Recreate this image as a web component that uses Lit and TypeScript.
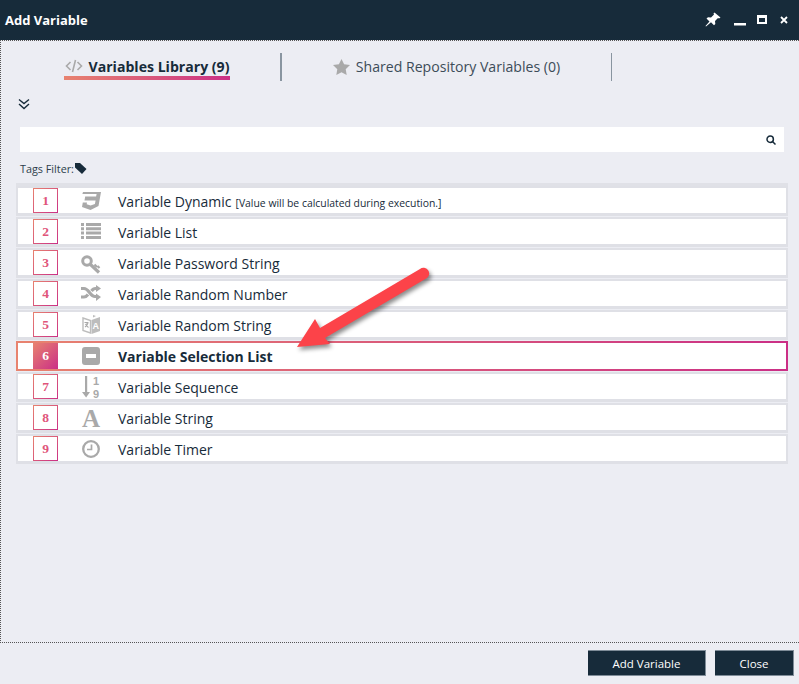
import { LitElement, css, html, svg } from "lit";
import { customElement } from "lit/decorators.js";

const GREY = "#a9a9a9";

const icons: Record<string, unknown> = {
  css3: svg`<path fill="${GREY}" d="M4 3h18l-2.500 14-8 4-8.500-3 .8-4.500h4.200l-.3 1.800 3.900 1.300 4.300-1.500.7-3.700H5.500l.7-3.900h10.900l.5-2.500H3.400z"/>`,
  list: svg`<path fill="${GREY}" d="M2 3h3v3H2zM7 3h15v3H7zM2 7.300h3v3H2zM7 7.300h15v3H7zM2 11.600h3v3H2zM7 11.600h15v3H7zM2 16h3v3H2zM7 16h15v3H7z"/>`,
  key: svg`<g fill="none" stroke="${GREY}"><circle cx="8" cy="10" r="4.300" stroke-width="3"/><path stroke-width="3.200" d="M11.500 13.500l8.500 8"/><path stroke-width="2.200" d="M15.500 13.500l2.500 2.500M18.500 15l2 2"/></g>`,
  shuffle: svg`<g fill="none" stroke="${GREY}" stroke-width="3.200"><path d="M2 6.500h3c5 0 6 8 11 8h2"/><path d="M2 15h3c2 0 3-1.200 4-2.500M12.500 9c1-1.500 2-2.500 4-2.500H18"/></g><path fill="${GREY}" d="M17 3l5 3.500-5 3.500zM17 11.500l5 3.500-5 4z"/>`,
  translate: svg`<path fill="#fff" stroke="#bdbdbd" stroke-width="1.400" d="M4 5l7.500 2.500V20L4 17.500z"/><path fill="#bdbdbd" d="M12.500 7l8.500-3v14l-8.500 3z"/><path fill="#bdbdbd" d="M14 2l3 1-3 1.500z"/><path stroke="#a9a9a9" stroke-width="1.100" fill="none" d="M5.500 9.500h4M7.500 9v1.500M6 14c1.500-1 2.500-2.500 3-4M6.500 11c.5 1.200 1.500 2.500 3 3.500"/><text x="16.800" y="15.500" text-anchor="middle" font-family="Liberation Sans" font-weight="700" font-size="9" fill="#fff">A</text>`,
  minus: svg`<path fill="${GREY}" fill-rule="evenodd" d="M6 3h12a3 3 0 0 1 3 3v12a3 3 0 0 1-3 3H6a3 3 0 0 1-3-3V6a3 3 0 0 1 3-3zM7 10v4h10v-4z"/>`,
  sequence: svg`<path fill="${GREY}" d="M6 1h2.200v16H11l-3.900 5.500L3 17h3z"/><text x="17" y="9.500" text-anchor="middle" font-family="Liberation Sans" font-weight="700" font-size="11" fill="${GREY}">1</text><text x="17" y="22.500" text-anchor="middle" font-family="Liberation Sans" font-weight="700" font-size="11" fill="${GREY}">9</text>`,
  letter: svg`<text x="12" y="20.500" text-anchor="middle" font-family="Liberation Serif" font-weight="700" font-size="25" fill="${GREY}">A</text>`,
  clock: svg`<g fill="none" stroke="${GREY}"><circle cx="12" cy="12" r="7.800" stroke-width="2.300"/><path stroke-width="1.700" d="M12.500 7.500v5H8"/></g>`,
};

const rows = [
  { icon: "css3", name: "Variable Dynamic", note: "[Value will be calculated during execution.]" },
  { icon: "list", name: "Variable List" },
  { icon: "key", name: "Variable Password String" },
  { icon: "shuffle", name: "Variable Random Number" },
  { icon: "translate", name: "Variable Random String" },
  { icon: "minus", name: "Variable Selection List", selected: true },
  { icon: "sequence", name: "Variable Sequence" },
  { icon: "letter", name: "Variable String" },
  { icon: "clock", name: "Variable Timer" },
];

@customElement("app-root")
export class AppRoot extends LitElement {
  static styles = css`
    :host {
      display: block;
      width: 799px;
      height: 684px;
      overflow: hidden;
      position: relative;
      background: #ecedf3;
      color: #172b3a;
      font-family: "Open Sans", "Noto Sans", sans-serif;
    }

    .titlebar {
      height: 40px;
      background: #172b3a;
      color: #fff;
      display: flex;
      align-items: center;
      padding: 0 11px 0 5px;
    }
    .title {
      font-size: 13px;
      font-weight: 700;
      flex: 1;
    }
    .win-btns {
      display: flex;
      align-items: center;
    }
    .win-btns svg {
      display: block;
    }

    .body {
      height: 603px;
      box-sizing: border-box;
      border-top: 1px dotted #555;
      border-bottom: 1px dotted #555;
      border-left: 1px dotted #555;
      padding-top: 12px;
    }

    .tabs {
      display: flex;
      height: 28px;
    }
    .tab {
      box-sizing: border-box;
      height: 28px;
      border-right: 2px solid #8995a0;
      display: flex;
      justify-content: center;
    }
    .tab-1 {
      width: 281px;
      padding-left: 13px;
    }
    .tab-2 {
      width: 330px;
      border-right-width: 1px;
      color: #3c4c58;
    }
    .tab-inner {
      box-sizing: border-box;
      display: flex;
      align-items: center;
      gap: 6px;
      height: 27px;
      padding: 0 1px;
      font-size: 14.100px;
      white-space: nowrap;
    }
    .tab-1 .tab-inner {
      padding-top: 3px;
      font-weight: 700;
      border-bottom: 4px solid;
      border-image: linear-gradient(90deg, #e8836f, #cb2f86) 1;
    }

    .expander {
      display: block;
      margin: 17px 0 0 17px;
    }

    .search {
      margin: 17px 15px 0 19px;
      height: 25px;
      background: #fff;
      display: flex;
      align-items: center;
      justify-content: flex-end;
      padding-right: 8px;
    }

    .tags {
      display: flex;
      align-items: center;
      gap: 1px;
      margin: 8px 0 0 19px;
      height: 16px;
      font-size: 10.800px;
      color: #2c3e4b;
    }

    .list {
      margin: 7px 11px 0 15px;
      border-top: 3px solid #e0e1e7;
      display: flex;
      flex-direction: column;
      gap: 1px;
    }
    .row {
      height: 30px;
      box-sizing: border-box;
      background: #fff;
      border: 2px solid #dfe0e6;
      border-bottom-width: 3px;
      display: flex;
      align-items: center;
      padding-left: 15px;
    }
    .row.selected {
      border: 2px solid;
      border-image: linear-gradient(90deg, #e8836f, #cb2f86) 1;
    }
    .num {
      box-sizing: border-box;
      width: 25px;
      height: 25px;
      border: 1px solid;
      border-image: linear-gradient(135deg, #e8836f, #cb2f86) 1;
      display: flex;
      align-items: center;
      justify-content: center;
      font-family: "Liberation Serif", serif;
      font-weight: 700;
      font-size: 13.500px;
      color: #e0557a;
    }
    .selected .num {
      border: 0;
      height: 26px;
      background: linear-gradient(135deg, #e8836f, #cb2f86);
      color: #fff;
    }
    .icon {
      width: 24px;
      height: 24px;
      margin: 0 15px 0 21px;
      flex: none;
    }
    .name {
      font-size: 14px;
      white-space: nowrap;
      margin-top: 2px;
    }
    .selected .name {
      font-weight: 700;
      margin-top: 0;
    }
    .note {
      font-size: 10.400px;
      margin-left: 4px;
    }

    .footer {
      display: flex;
      justify-content: flex-end;
      gap: 9px;
      padding: 7px 5px 0 0;
    }
    .btn {
      height: 26px;
      box-sizing: border-box;
      background: #172b3a;
      color: #fff;
      border: 0;
      border-right: 1px solid #7f8c98;
      border-bottom: 1px solid #7f8c98;
      border-top: 1px solid #7f8c98;
      font: 11.500px "Open Sans", "Noto Sans", sans-serif;
      padding: 0;
    }
    .add {
      width: 118px;
    }
    .close {
      width: 79px;
    }

    .arrow {
      position: absolute;
      left: 290px;
      top: 260px;
      filter: drop-shadow(2px 3px 2px rgba(0, 0, 0, 0.45));
    }
  `;

  render() {
    return html`
      <div class="titlebar">
        <div class="title">Add Variable</div>
        <div class="win-btns">
          <svg width="16" height="16" viewBox="0 0 16 16" style="margin-right:13px">
            <path fill="#fff" d="M9.500 0.500l6 5-1.500 1-1-.5-3 3 .3 3-1.300 1.300-3-3L1 14.500 0.500 14l4-4.500-3-3L3 5.300l3 .3 3-3-.5-1z"/>
          </svg>
          <svg width="12" height="3" viewBox="0 0 12 3" style="margin:9px 10px 0 0"><path fill="#fff" d="M0 0h12v2.500H0z"/></svg>
          <svg width="12" height="10" viewBox="0 0 12 10" style="margin-right:12px">
            <path fill="#fff" fill-rule="evenodd" d="M1 0h10v9H1zM3 3v4h6V3z"/>
          </svg>
          <svg width="8" height="8" viewBox="0 0 8 8">
            <path stroke="#fff" stroke-width="1.800" d="M1 1l6 6M7 1L1 7"/>
          </svg>
        </div>
      </div>

      <div class="body">
        <div class="tabs">
          <div class="tab tab-1">
            <div class="tab-inner">
              <svg width="18" height="14" viewBox="0 0 17 14" fill="none" stroke="${GREY}" stroke-width="1.600">
                <path d="M5 3L1 7l4 4M12 3l4 4-4 4M10 1L7 13"/>
              </svg>
              Variables Library (9)
            </div>
          </div>
          <div class="tab tab-2">
            <div class="tab-inner">
              <svg width="17" height="16" viewBox="0 0 17 16">
                <path fill="${GREY}" d="M8.500 0l2.600 5.300 5.900.8-4.300 4.100 1 5.800-5.200-2.700L3.300 16l1-5.800L0 6.100l5.900-.8z"/>
              </svg>
              Shared Repository Variables (0)
            </div>
          </div>
        </div>

        <svg class="expander" width="12" height="12" viewBox="0 0 12 12" fill="none" stroke="#172b3a" stroke-width="1.400">
          <path d="M1 1.500l5 4 5-4M1 6l5 4.500L11 6"/>
        </svg>

        <div class="search">
          <svg width="10" height="10" viewBox="0 0 10 10" fill="none" stroke="#172b3a" stroke-width="1.500">
            <circle cx="4.200" cy="4.200" r="3.200"/><path d="M6.500 6.500L9.500 9.500"/>
          </svg>
        </div>

        <div class="tags">
          Tags Filter:
          <svg width="12" height="11" viewBox="0 0 12 11">
            <path fill="#172b3a" d="M0 0h5l6.500 6L7 11 0 4.500z"/>
          </svg>
        </div>

        <div class="list">
          ${rows.map(
            (r, i) => html`
              <div class="row ${r.selected ? "selected" : ""}">
                <div class="num">${i + 1}</div>
                <svg class="icon" viewBox="0 0 24 24">${icons[r.icon]}</svg>
                <div class="name">
                  ${r.name}${r.note ? html`<span class="note">${r.note}</span>` : ""}
                </div>
              </div>
            `
          )}
        </div>
      </div>

      <div class="footer">
        <button class="btn add">Add Variable</button>
        <button class="btn close">Close</button>
      </div>

      <svg class="arrow" width="150" height="100" viewBox="0 0 150 100">
        <path fill="#fc4349" d="M130 9a5.200 5.200 0 0 1 7 9L35 78l5 6-33 3 18-28 5 9z"/>
      </svg>
    `;
  }
}
